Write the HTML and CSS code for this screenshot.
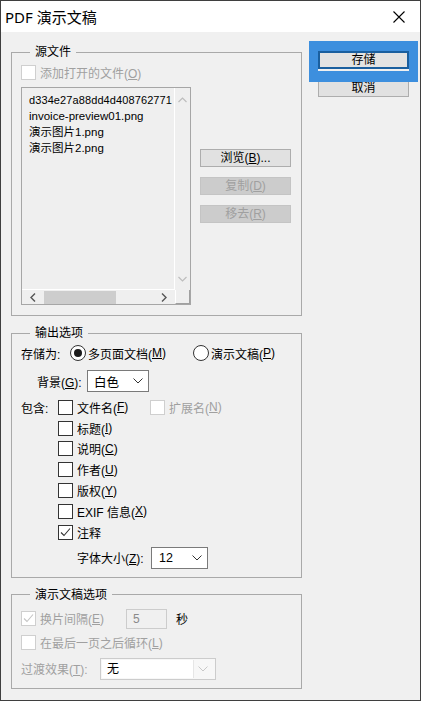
FILE: index.html
```html
<!DOCTYPE html>
<html lang="zh-CN">
<head>
<meta charset="utf-8">
<title>PDF 演示文稿</title>
<link rel="stylesheet" href="styles.css">
</head>
<body>
<div class="window">
  <div class="titlebar">
    <span class="title">PDF 演示文稿</span>
    <svg class="close" width="12" height="12" viewBox="0 0 12 12"><path d="M0.5 0.5 L11.5 11.5 M11.5 0.5 L0.5 11.5" stroke="#000" stroke-width="1.1" fill="none"/></svg>
  </div>
  <div class="content">
    <div class="left">
      <fieldset class="group g-source">
        <legend>源文件</legend>
        <div class="row check-row disabled"><span class="box"></span><span>添加打开的文件(<u>O</u>)</span></div>
        <div class="source-row">
          <div class="listbox">
            <div class="items">
              <div class="item">d334e27a88dd4d408762771</div>
              <div class="item">invoice-preview01.png</div>
              <div class="item">演示图片1.png</div>
              <div class="item">演示图片2.png</div>
            </div>
            <div class="vscroll">
              <svg width="9" height="6" viewBox="0 0 9 6"><polyline points="0.5,5 4.5,1 8.5,5" fill="none" stroke="#bdbdbd" stroke-width="1.2"/></svg>
              <svg width="9" height="6" viewBox="0 0 9 6"><polyline points="0.5,1 4.5,5 8.5,1" fill="none" stroke="#bdbdbd" stroke-width="1.2"/></svg>
            </div>
            <div class="hscroll">
              <svg class="harrow" width="6" height="9" viewBox="0 0 6 9"><polyline points="5,0.5 1,4.5 5,8.5" fill="none" stroke="#555" stroke-width="1.4"/></svg>
              <span class="thumb"></span>
              <svg class="harrow right-arrow" width="6" height="9" viewBox="0 0 6 9"><polyline points="1,0.5 5,4.5 1,8.5" fill="none" stroke="#555" stroke-width="1.4"/></svg>
            </div>
            <div class="corner"></div>
          </div>
          <div class="side-buttons">
            <button class="btn">浏览(<u>B</u>)...</button>
            <button class="btn off">复制(<u>D</u>)</button>
            <button class="btn off">移去(<u>R</u>)</button>
          </div>
        </div>
      </fieldset>

      <fieldset class="group g-output">
        <legend>输出选项</legend>
        <div class="row save-row">
          <span class="lbl-save">存储为:</span>
          <span class="opt opt-multi"><span class="radio on"></span>多页面文档(<u>M</u>)</span>
          <span class="opt"><span class="radio"></span>演示文稿(<u>P</u>)</span>
        </div>
        <div class="row bg-row">
          <span class="lbl-bg">背景(<u>G</u>):</span>
          <span class="select sel-bg">白色<svg class="chev" width="10" height="6" viewBox="0 0 10 6"><polyline points="0.5,0.5 5,5 9.5,0.5" fill="none" stroke="#333" stroke-width="1"/></svg></span>
        </div>
        <div class="row inc-row">
          <span class="lbl-inc">包含:</span>
          <span class="opt opt-file"><span class="box"></span>文件名(<u>F</u>)</span>
          <span class="opt disabled"><span class="box"></span>扩展名(<u>N</u>)</span>
        </div>
        <div class="row inc-row sub"><span class="box"></span>标题(<u>I</u>)</div>
        <div class="row inc-row sub"><span class="box"></span>说明(<u>C</u>)</div>
        <div class="row inc-row sub"><span class="box"></span>作者(<u>U</u>)</div>
        <div class="row inc-row sub"><span class="box"></span>版权(<u>Y</u>)</div>
        <div class="row inc-row sub"><span class="box"></span>EXIF 信息(<u>X</u>)</div>
        <div class="row inc-row sub"><span class="box"><svg width="13" height="13" viewBox="0 0 13 13"><polyline points="2,6.5 5,9.5 11,2.5" fill="none" stroke="#333" stroke-width="1.1"/></svg></span>注释</div>
        <div class="row font-row">
          <span class="lbl-font">字体大小(<u>Z</u>):</span>
          <span class="select sel-font">12<svg class="chev" width="10" height="6" viewBox="0 0 10 6"><polyline points="0.5,0.5 5,5 9.5,0.5" fill="none" stroke="#333" stroke-width="1"/></svg></span>
        </div>
      </fieldset>

      <fieldset class="group g-slides">
        <legend>演示文稿选项</legend>
        <div class="row interval-row">
          <span class="opt opt-interval disabled"><span class="box"><svg width="13" height="13" viewBox="0 0 13 13"><polyline points="2,6.5 5,9.5 11,2.5" fill="none" stroke="#c4c4c4" stroke-width="1.1"/></svg></span>换片间隔(<u>E</u>)</span>
          <span class="num">5</span>
          <span>秒</span>
        </div>
        <div class="row loop-row disabled"><span class="box"></span>在最后一页之后循环(<u>L</u>)</div>
        <div class="row trans-row">
          <span class="lbl-trans">过渡效果(<u>T</u>):</span>
          <span class="select sel-trans"><span class="sel-value">无</span><svg class="chev" width="10" height="6" viewBox="0 0 10 6"><polyline points="0.5,0.5 5,5 9.5,0.5" fill="none" stroke="#c8c8c8" stroke-width="1"/></svg></span>
        </div>
      </fieldset>
    </div>

    <div class="right">
      <div class="focus-wrap">
        <button class="btn primary">存储</button>
        <span class="focus-ring"></span>
      </div>
      <button class="btn">取消</button>
    </div>
  </div>
</div>
</body>
</html>
```

FILE: styles.css
```css
* { box-sizing: border-box; }
html, body { margin: 0; padding: 0; }
body {
  width: 421px;
  height: 701px;
  overflow: hidden;
  font-family: "Liberation Sans", "Noto Sans CJK SC", sans-serif;
  font-size: 12px;
  color: #000;
  background: #f0f0f0;
}
u { text-decoration: underline; text-underline-offset: 1px; }

.window {
  width: 421px;
  height: 701px;
  border: 1px solid #3f3f3f;
  background: #f0f0f0;
  display: flex;
  flex-direction: column;
}
.titlebar {
  height: 31px;
  flex: none;
  background: #fff;
  display: flex;
  align-items: center;
  justify-content: space-between;
  padding: 0 15px 0 4px;
}
.title {
  font-family: "Noto Sans", "Noto Sans CJK SC", sans-serif;
  font-size: 15px;
  line-height: 20px;
}
.close { display: block; margin-top: 1px; }

.content { display: flex; padding-left: 10px; }
.left { width: 291px; flex: none; display: flex; flex-direction: column; }
.right {
  width: 91px;
  margin-left: 16px;
  padding-top: 19px;
  display: flex;
  flex-direction: column;
  gap: 10px;
}

.group {
  margin: 9px 0 0;
  border: 1px solid #a9a9a9;
  padding: 0 8px 8px 9px;
  min-width: 0;
}
.group legend {
  margin-left: 9px;
  padding: 0 5px;
  height: 16px;
  line-height: 16px;
}
.g-source { margin-top: 12px; padding-bottom: 10px; }

.row { display: flex; align-items: center; white-space: nowrap; }
.disabled { color: #a0a0a0; }
.box {
  width: 15px;
  height: 15px;
  flex: none;
  border: 1px solid #333;
  background: #fff;
  margin-right: 4px;
  display: flex;
  align-items: center;
  justify-content: center;
}
.disabled .box { border-color: #cfcfcf; }

.check-row { margin-top: 4px; height: 17px; }

.source-row { display: flex; margin-top: 6px; }
.listbox {
  width: 170px;
  height: 218px;
  border: 1px solid #a6a6a6;
  background: #efefef;
  display: grid;
  grid-template-columns: 153px 15px;
  grid-template-rows: 202px 14px;
}
.items {
  border-right: 1px solid #fff;
  border-bottom: 1px solid #fff;
  padding: 4px 0 0 7px;
  overflow: hidden;
}
.item {
  height: 16px;
  line-height: 16px;
  white-space: nowrap;
  font-size: 11.5px;
}
.item:first-child { font-size: 11px; letter-spacing: 0.1px; }
.vscroll {
  display: flex;
  flex-direction: column;
  justify-content: space-between;
  align-items: center;
  padding: 9px 0 8px;
}
.vscroll svg { display: block; }
.hscroll {
  display: flex;
  align-items: center;
  padding-left: 8px;
}
.harrow { display: block; flex: none; }
.thumb {
  width: 72px;
  height: 13px;
  background: #cdcdcd;
  margin-left: 8px;
}
.right-arrow { margin-left: auto; margin-right: 8px; }
.corner {
  border-right: 1px solid #a0a0a0;
  border-bottom: 1px solid #a0a0a0;
  border-left: 1px solid #fff;
}

.side-buttons {
  margin-left: 9px;
  padding-top: 62px;
  display: flex;
  flex-direction: column;
  gap: 10px;
}
.btn {
  width: 91px;
  height: 18px;
  padding: 0;
  border: 1px solid #adadad;
  background: #e1e1e1;
  font-family: "Liberation Sans", "Noto Sans CJK SC", sans-serif;
  font-size: 12px;
  line-height: 16px;
  color: #000;
  display: block;
}
.btn.off { background: #cccccc; border-color: #c4c4c4; color: #a0a0a0; }
.focus-wrap { position: relative; height: 18px; }
.btn.primary { border: 2px solid #1a5f9f; background: #e3e3e3; line-height: 14px; }
.focus-ring {
  position: absolute;
  left: -9px;
  top: -10px;
  width: 109px;
  height: 41px;
  border-style: solid;
  border-color: #3d8fde;
  border-width: 10px 9px 11px 9px;
  pointer-events: none;
}

/* output options */
.save-row { margin-top: 2px; height: 20px; }
.lbl-save { width: 49px; }
.opt { display: flex; align-items: center; }
.opt-multi { width: 123px; }
.radio {
  width: 16px;
  height: 16px;
  flex: none;
  border: 1px solid #333;
  border-radius: 50%;
  background: #fff;
  margin-right: 2px;
  display: flex;
  align-items: center;
  justify-content: center;
}
.radio.on::after {
  content: "";
  width: 8px;
  height: 8px;
  border-radius: 50%;
  background: #1a1a1a;
}
.bg-row { margin-top: 7px; height: 22px; }
.lbl-bg { margin-left: 16px; width: 50px; }
.select {
  height: 22px;
  border: 1px solid #7a7a7a;
  background: #fff;
  display: flex;
  align-items: center;
  padding-left: 6px;
}
.chev { display: block; margin-left: auto; margin-right: 5px; flex: none; }
.sel-bg { width: 62px; font-size: 12.5px; }
.inc-row { height: 20.8px; }
.bg-row + .inc-row { margin-top: 5px; }
.lbl-inc { width: 37px; }
.opt-file { width: 92px; }
.sub { padding-left: 37px; }
.font-row { margin-top: 4.4px; height: 22px; }
.lbl-font { margin-left: 56px; width: 74px; }
.sel-font { width: 57px; padding-left: 7px; font-size: 12.5px; }

/* slides options */
.interval-row { margin-top: 6px; height: 20px; }
.opt-interval { width: 105px; }
.num {
  width: 41px;
  height: 20px;
  border: 1px solid #cccccc;
  background: #f0f0f0;
  color: #8a8a8a;
  padding-left: 6px;
  line-height: 18px;
  margin-right: 9px;
}
.loop-row { margin-top: 6px; height: 16px; }
.trans-row { margin-top: 7px; height: 22px; }
.lbl-trans { width: 79px; color: #a0a0a0; }
.sel-trans {
  width: 116px;
  border-color: #cccccc;
  background: #f7f7f7;
  padding: 1px;
}
.sel-value {
  width: 92px;
  height: 18px;
  background: #fff;
  border-right: 1px solid #e6e6e6;
  padding-left: 5px;
  line-height: 18px;
}
.sel-trans .chev { margin-right: 6px; }
```
